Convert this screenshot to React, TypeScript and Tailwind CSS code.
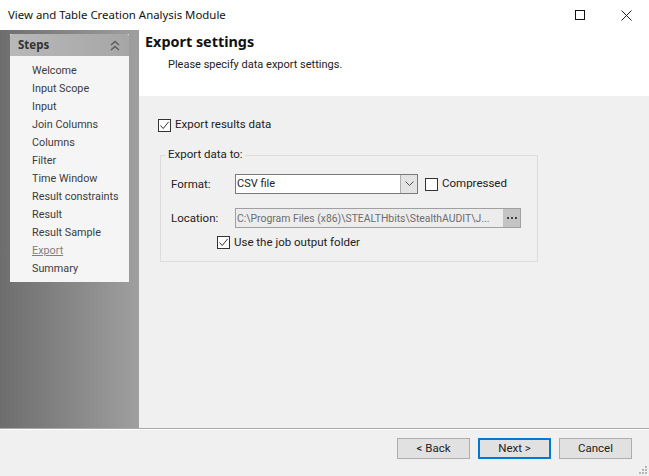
import React from "react";

const steps = ["Welcome","Input Scope","Input","Join Columns","Columns","Filter","Time Window","Result constraints","Result","Result Sample","Export","Summary"];

function Check({ checked }: { checked: boolean }) {
  return (
    <span className="w-[13px] h-[13px] border border-[#333333] bg-white shrink-0 flex items-center justify-center">
      {checked && (
        <svg width="11" height="11" viewBox="0 0 11 11" fill="none"><path d="M1.5 5.5 L4.2 8.5 L9.7 1.8" stroke="#333333" strokeWidth="1" /></svg>
      )}
    </span>
  );
}

function Btn({ label, primary }: { label: string; primary?: boolean }) {
  return (
    <div className={primary
      ? "w-[73px] h-[21px] bg-[#e1e1e1] border-2 border-[#0078d7] flex items-center justify-center text-[#222222]"
      : "w-[73px] h-[21px] bg-[#e1e1e1] border border-[#adadad] flex items-center justify-center text-[#222222]"}>
      {label}
    </div>
  );
}

export default function App() {
  return (
    <div className="w-[649px] h-[476px] flex flex-col bg-[#f0f0f0] overflow-hidden font-['Roboto','Noto_Sans',sans-serif] text-[11.5px] text-[#222222]">
      <div className="h-[30px] bg-white flex items-center pl-2 shrink-0">
        <span className="font-['Noto_Sans',sans-serif] text-[11.4px] text-[#111111] flex-1">View and Table Creation Analysis Module</span>
        <div className="w-[46px] flex justify-center">
          <span className="w-[10px] h-[10px] border border-[#111111]" />
        </div>
        <div className="w-[46px] flex justify-center">
          <svg width="11" height="11" viewBox="0 0 11 11"><path d="M0.5 0.5 L10.5 10.5 M10.5 0.5 L0.5 10.5" stroke="#222222" strokeWidth="1" /></svg>
        </div>
      </div>
      <div className="flex flex-1 min-h-0">
        <div className="w-[139px] bg-gradient-to-r from-[#6e6e6e] to-[#9f9f9f] pt-1 pl-[10px] shrink-0">
          <div className="w-[119px] h-[248px] bg-[#f5f5f6] flex flex-col">
            <div className="h-[22px] rounded-t-[2px] bg-gradient-to-r from-[#b8b8b8] to-[#a6a6a6] flex items-center justify-between pl-2 pr-[9px] shrink-0">
              <span className="font-['Noto_Sans',sans-serif] font-bold text-[11.5px] text-[#333333]">Steps</span>
              <svg width="10" height="11" viewBox="0 0 10 11" fill="none"><path d="M1 5 L5 1.5 L9 5 M1 10 L5 6.5 L9 10" stroke="#5a5a5a" strokeWidth="1.4" /></svg>
            </div>
            <div className="pt-[6px] pl-[22px] flex flex-col text-[10.8px]">
              {steps.map((s) => (
                <div key={s} className={s === "Export" ? "h-[18px] leading-[18px] text-[#808080] underline whitespace-nowrap" : "h-[18px] leading-[18px] text-[#3c3c3c] whitespace-nowrap"}>{s}</div>
              ))}
            </div>
          </div>
        </div>
        <div className="flex-1 flex flex-col min-w-0">
          <div className="h-[66px] bg-white pl-[6px] shrink-0">
            <div className="font-['Noto_Sans',sans-serif] text-[14.4px] font-bold text-[#111111] leading-[20px] pt-[2px] h-[22px]">Export settings</div>
            <div className="pl-[23px] mt-[5px] text-[11px] text-[#222222] leading-[16px]">Please specify data export settings.</div>
          </div>
          <div className="flex-1 pl-[19px] pt-[21px]">
            <div className="flex items-center gap-[4px] h-[16px]">
              <Check checked />
              <span>Export results data</span>
            </div>
            <div className="relative mt-[22px] w-[378px] h-[107px] border border-[#dcdcdc] ml-[2px] pl-[10px] pt-[18px]">
              <span className="absolute left-[5px] -top-[10px] bg-[#f0f0f0] px-[2px] leading-[16px]">Export data to:</span>
              <div className="flex items-center h-[20px]">
                <span className="w-[64px] pt-px">Format:</span>
                <div className="w-[183px] h-[20px] bg-white border border-[#7a7a7a] flex items-center pl-[1px]">
                  <span className="flex-1 text-[11px] pt-px">CSV file</span>
                  <span className="w-[17px] h-[18px] bg-[#e3e3e3] border-l border-[#adadad] flex items-center justify-center">
                    <svg width="9" height="6" viewBox="0 0 9 6" fill="none"><path d="M0.5 0.5 L4.5 4.5 L8.5 0.5" stroke="#555555" strokeWidth="1" /></svg>
                  </span>
                </div>
                <span className="ml-[7px]"><Check checked={false} /></span>
                <span className="ml-[4px] -mt-px">Compressed</span>
              </div>
              <div className="flex items-center h-[20px] mt-[14px]">
                <span className="w-[64px] pt-px">Location:</span>
                <div className="w-[286px] h-[20px] bg-[#ececec] border border-[#a0a0a0] flex items-center pl-[1px] text-[#6d6d6d]">
                  <span className="flex-1 whitespace-nowrap text-[10.4px] pt-px">C:\Program Files (x86)\STEALTHbits\StealthAUDIT\J...</span>
                  <span className="w-[17px] h-[18px] bg-[#c4c4c4] flex items-center justify-center gap-[2px]">
                    <span className="w-[2px] h-[2px] bg-[#444444]" />
                    <span className="w-[2px] h-[2px] bg-[#444444]" />
                    <span className="w-[2px] h-[2px] bg-[#444444]" />
                  </span>
                </div>
              </div>
              <div className="flex items-center gap-[4px] h-[16px] mt-[6px] ml-[46px]">
                <Check checked />
                <span className="pt-px">Use the job output folder</span>
              </div>
            </div>
          </div>
        </div>
      </div>
      <div className="h-[48px] shrink-0 border-t border-t-[#a8a8a8] bg-[#f0f0f0] relative flex items-start justify-end gap-2 pt-[9px] pr-[17px]">
        <div className="absolute left-0 right-0 top-0 h-px bg-white" />
        <Btn label="< Back" />
        <Btn label="Next >" primary />
        <Btn label="Cancel" />
        <svg className="absolute right-[1px] bottom-[1px]" width="10" height="10" viewBox="0 0 10 10" fill="#b5b5b5">
          <rect x="7" y="1" width="2" height="2" /><rect x="4" y="4" width="2" height="2" /><rect x="7" y="4" width="2" height="2" /><rect x="1" y="7" width="2" height="2" /><rect x="4" y="7" width="2" height="2" /><rect x="7" y="7" width="2" height="2" />
        </svg>
      </div>
    </div>
  );
}
